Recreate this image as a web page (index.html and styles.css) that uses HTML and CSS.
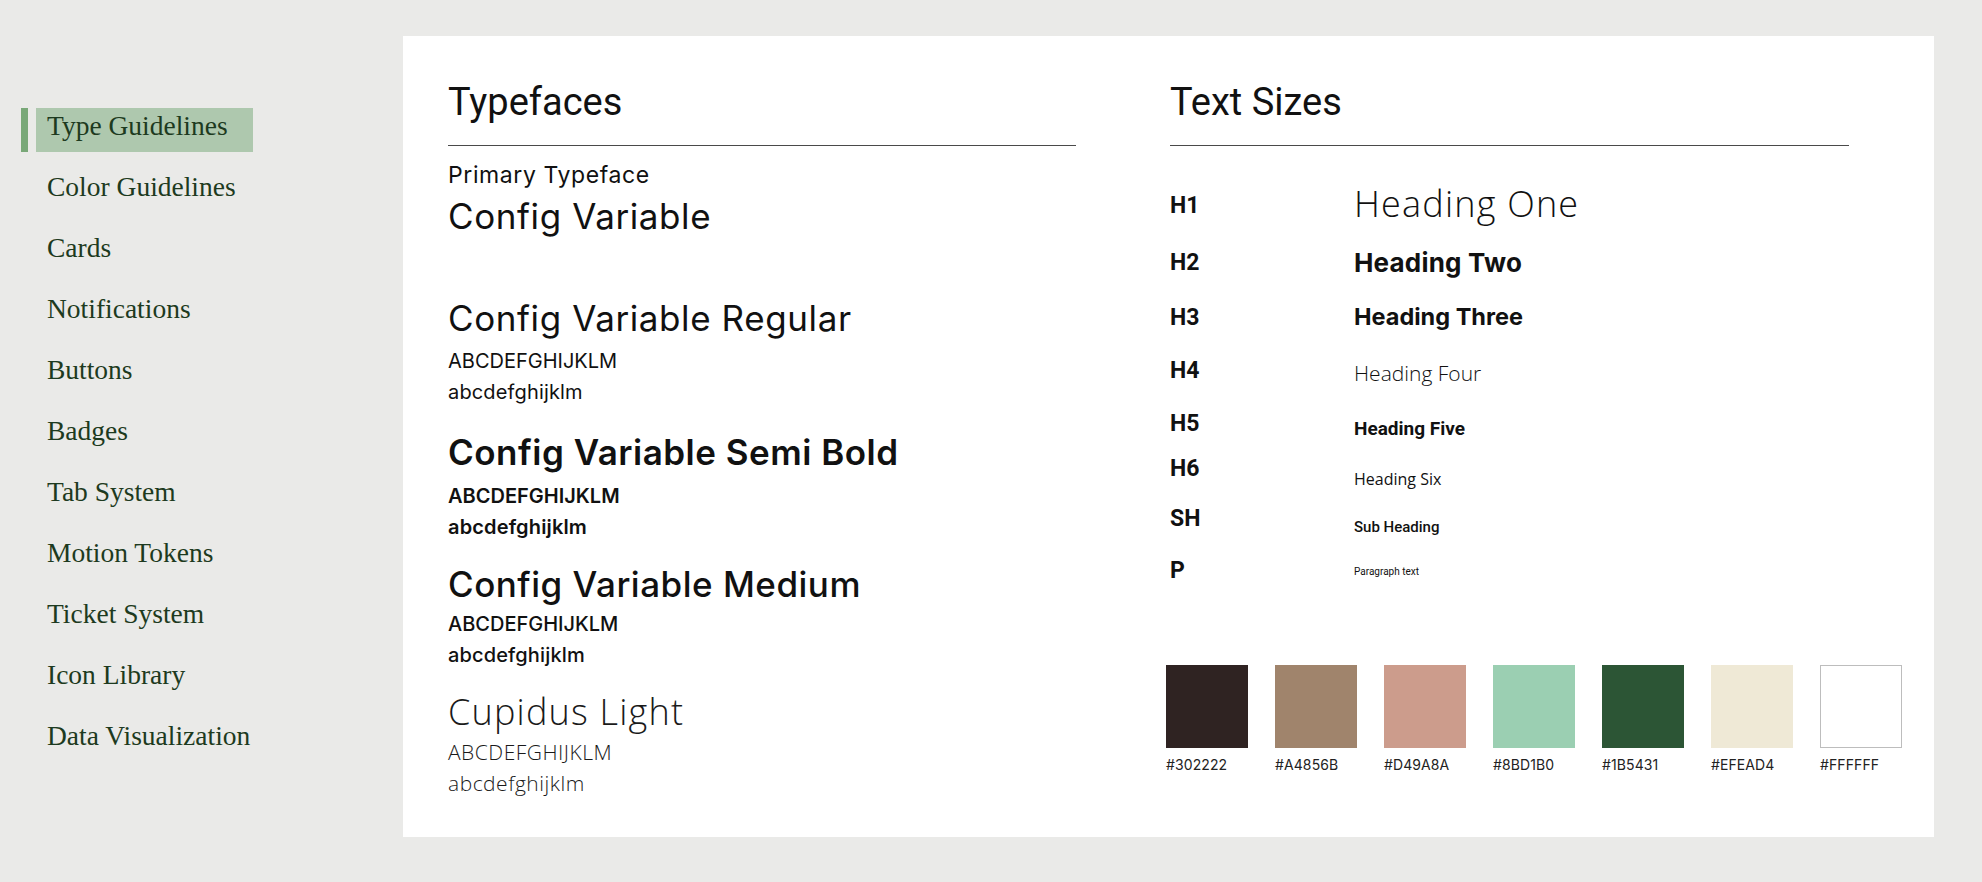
FILE: index.html
```html
<!DOCTYPE html>
<html lang="en">
<head>
<meta charset="utf-8">
<title>Type Guidelines</title>
<link rel="stylesheet" href="styles.css">
</head>
<body>
<div class="page">
  <nav class="sidebar">
    <a class="nav-item is-active"><span class="nav-bar"></span><span class="nav-label">Type Guidelines</span></a>
    <a class="nav-item"><span class="nav-bar"></span><span class="nav-label">Color Guidelines</span></a>
    <a class="nav-item"><span class="nav-bar"></span><span class="nav-label">Cards</span></a>
    <a class="nav-item"><span class="nav-bar"></span><span class="nav-label">Notifications</span></a>
    <a class="nav-item"><span class="nav-bar"></span><span class="nav-label">Buttons</span></a>
    <a class="nav-item"><span class="nav-bar"></span><span class="nav-label">Badges</span></a>
    <a class="nav-item"><span class="nav-bar"></span><span class="nav-label">Tab System</span></a>
    <a class="nav-item"><span class="nav-bar"></span><span class="nav-label">Motion Tokens</span></a>
    <a class="nav-item"><span class="nav-bar"></span><span class="nav-label">Ticket System</span></a>
    <a class="nav-item"><span class="nav-bar"></span><span class="nav-label">Icon Library</span></a>
    <a class="nav-item"><span class="nav-bar"></span><span class="nav-label">Data Visualization</span></a>
  </nav>

  <main class="card">
    <section class="col col-left">
      <h2 class="section-title">Typefaces</h2>
      <hr class="rule">
      <div class="primary">
        <div class="primary-label">Primary Typeface</div>
        <div class="primary-name">Config Variable</div>
      </div>
      <div class="family family-regular">
        <div class="family-name">Config Variable Regular</div>
        <div class="family-upper">ABCDEFGHIJKLM</div>
        <div class="family-lower">abcdefghijklm</div>
      </div>
      <div class="family family-bold">
        <div class="family-name">Config Variable Semi Bold</div>
        <div class="family-upper">ABCDEFGHIJKLM</div>
        <div class="family-lower">abcdefghijklm</div>
      </div>
      <div class="family family-medium">
        <div class="family-name">Config Variable Medium</div>
        <div class="family-upper">ABCDEFGHIJKLM</div>
        <div class="family-lower">abcdefghijklm</div>
      </div>
      <div class="family family-light">
        <div class="family-name">Cupidus Light</div>
        <div class="family-upper">ABCDEFGHIJKLM</div>
        <div class="family-lower">abcdefghijklm</div>
      </div>
    </section>

    <section class="col col-right">
      <h2 class="section-title">Text Sizes</h2>
      <hr class="rule">
      <div class="sizes">
        <div class="size-row row-h1"><span class="size-tag">H1</span><span class="size-sample">Heading One</span></div>
        <div class="size-row row-h2"><span class="size-tag">H2</span><span class="size-sample">Heading Two</span></div>
        <div class="size-row row-h3"><span class="size-tag">H3</span><span class="size-sample">Heading Three</span></div>
        <div class="size-row row-h4"><span class="size-tag">H4</span><span class="size-sample">Heading Four</span></div>
        <div class="size-row row-h5"><span class="size-tag">H5</span><span class="size-sample">Heading Five</span></div>
        <div class="size-row row-h6"><span class="size-tag">H6</span><span class="size-sample">Heading Six</span></div>
        <div class="size-row row-sh"><span class="size-tag">SH</span><span class="size-sample">Sub Heading</span></div>
        <div class="size-row row-p"><span class="size-tag">P</span><span class="size-sample">Paragraph text</span></div>
      </div>
      <div class="swatches">
        <div class="swatch"><div class="chip chip-1"></div><div class="chip-code">#302222</div></div>
        <div class="swatch"><div class="chip chip-2"></div><div class="chip-code">#A4856B</div></div>
        <div class="swatch"><div class="chip chip-3"></div><div class="chip-code">#D49A8A</div></div>
        <div class="swatch"><div class="chip chip-4"></div><div class="chip-code">#8BD1B0</div></div>
        <div class="swatch"><div class="chip chip-5"></div><div class="chip-code">#1B5431</div></div>
        <div class="swatch"><div class="chip chip-6"></div><div class="chip-code">#EFEAD4</div></div>
        <div class="swatch"><div class="chip chip-7"></div><div class="chip-code">#FFFFFF</div></div>
      </div>
    </section>
  </main>
</div>
</body>
</html>
```

FILE: styles.css
```css
* { box-sizing: border-box; }

html, body {
  margin: 0;
  padding: 0;
  background: #eaeae8;
}

body {
  font-family: Roboto, "Liberation Sans", sans-serif;
  color: #111;
}

.page {
  display: flex;
  align-items: flex-start;
  width: 1982px;
  height: 882px;
  overflow: hidden;
}

/* ---------- Sidebar ---------- */
.sidebar {
  width: 403px;
  flex: 0 0 403px;
  padding: 108px 0 0 21px;
  display: flex;
  flex-direction: column;
  gap: 17px;
}

.nav-item {
  display: flex;
  align-items: stretch;
  gap: 8px;
  height: 44px;
  text-decoration: none;
}

.nav-bar {
  width: 7px;
  flex: 0 0 7px;
}

.nav-label {
  width: 217px;
  padding: 0 0 8px 11px;
  font-family: "Liberation Serif", "Times New Roman", serif;
  font-size: 27.5px;
  line-height: 36px;
  color: #1d3a20;
  white-space: nowrap;
}

.nav-item.is-active .nav-bar { background: #79a878; }
.nav-item.is-active .nav-label { background: #aec8ae; }

/* ---------- Card ---------- */
.card {
  margin-top: 36px;
  width: 1531px;
  height: 801px;
  background: #ffffff;
  padding: 47px 28px 0 45px;
  display: grid;
  grid-template-columns: 628px 1fr;
  column-gap: 94px;
}

.col { min-width: 0; }

.section-title {
  margin: 0;
  font-family: Roboto, sans-serif;
  font-weight: 400;
  font-size: 38px;
  line-height: 38px;
  color: #111;
}

.rule {
  margin: 24px 0 0 0;
  height: 0;
  border: 0;
  border-top: 1px solid #4a4a4a;
}

.col-right .rule { width: 679px; }

/* ---------- Typefaces column ---------- */
.col-left { font-family: Inter, Roboto, sans-serif; }

.primary { margin-top: 18px; }

.primary-label {
  font-size: 23px;
  line-height: 23px;
  font-weight: 400;
  letter-spacing: 0.6px;
}

.primary-name {
  margin-top: 12px;
  font-size: 35px;
  line-height: 35px;
  font-weight: 400;
  letter-spacing: 0.6px;
}

.family-name {
  font-size: 35px;
  line-height: 35px;
}

.family-upper {
  margin-top: 15px;
  font-size: 20px;
  line-height: 20px;
}

.family-lower {
  margin-top: 11px;
  font-size: 20px;
  line-height: 20px;
  letter-spacing: 0.15px;
}

.family-regular { margin-top: 67px; }
.family-regular .family-name { letter-spacing: 0.6px; }
.family-regular .family-name,
.family-regular .family-upper,
.family-regular .family-lower { font-weight: 400; }

.family-bold { margin-top: 33px; }
.family-bold .family-name { letter-spacing: 0.5px; }
.family-bold .family-name,
.family-bold .family-upper,
.family-bold .family-lower { font-weight: 600; }
.family-bold .family-upper { margin-top: 16px; }

.family-medium { margin-top: 30px; }
.family-medium .family-name { letter-spacing: 0.5px; }
.family-medium .family-name,
.family-medium .family-upper,
.family-medium .family-lower { font-weight: 500; }
.family-medium .family-upper { margin-top: 12px; }

.family-light { margin-top: 29px; }
.family-light .family-name,
.family-light .family-upper,
.family-light .family-lower {
  font-family: "Open Sans", sans-serif;
  font-weight: 300;
  color: #1a1a1a;
}
.family-light .family-name { font-size: 36px; line-height: 36px; letter-spacing: 1.2px; }
.family-light .family-upper { margin-top: 12px; font-size: 21px; line-height: 21px; letter-spacing: 0.5px; }
.family-light .family-lower { margin-top: 10px; font-size: 21px; line-height: 21px; letter-spacing: 0.5px; }

/* ---------- Text sizes column ---------- */
.sizes {
  margin-top: 40px;
  display: flex;
  flex-direction: column;
}

.size-row {
  display: flex;
  align-items: flex-start;
}

.size-tag {
  width: 184px;
  flex: 0 0 184px;
  font-size: 23px;
  line-height: 23px;
  font-weight: 700;
  color: #111;
}

.size-sample { color: #111; white-space: nowrap; }

.row-h1 .size-tag { margin-top: 8px; }
.row-h1 .size-sample {
  font-family: "Open Sans", sans-serif;
  font-weight: 300;
  font-size: 36px;
  line-height: 36px;
  letter-spacing: 1.2px;
}

.row-h2 { margin-top: 28px; }
.row-h2 .size-tag { margin-top: 1px; }
.row-h2 .size-sample {
  font-family: Inter, sans-serif;
  font-weight: 700;
  font-size: 26px;
  line-height: 26px;
  letter-spacing: 0.2px;
}

.row-h3 { margin-top: 29px; }
.row-h3 .size-tag { margin-top: 1px; }
.row-h3 .size-sample {
  font-family: Inter, sans-serif;
  font-weight: 700;
  font-size: 23.5px;
  line-height: 24px;
}

.row-h4 { margin-top: 30px; }
.row-h4 .size-sample {
  margin-top: 4px;
  font-family: "Open Sans", sans-serif;
  font-weight: 300;
  font-size: 21px;
  line-height: 21px;
}

.row-h5 { margin-top: 28px; }
.row-h5 .size-sample { margin-top: 7px; font-weight: 700; font-size: 19px; line-height: 19px; }

.row-h6 { margin-top: 19px; }
.row-h6 .size-sample {
  margin-top: 14px;
  font-family: "Open Sans", sans-serif;
  font-weight: 400;
  font-size: 16px;
  line-height: 17px;
}

.row-sh { margin-top: 19px; }
.row-sh .size-sample { margin-top: 13px; font-weight: 500; font-size: 15px; line-height: 15px; }

.row-p { margin-top: 24px; }
.row-p .size-sample { margin-top: 8px; font-weight: 400; font-size: 10px; line-height: 10px; }

/* ---------- Swatches ---------- */
.swatches {
  margin-top: 83px;
  margin-left: -4px;
  display: flex;
  gap: 27px;
}

.swatch { width: 82px; }

.chip {
  width: 82px;
  height: 83px;
}

.chip-1 { background: #2f2322; }
.chip-2 { background: #a0846c; }
.chip-3 { background: #cc9c8c; }
.chip-4 { background: #9bcfb2; }
.chip-5 { background: #2c5535; }
.chip-6 { background: #efe9d6; }
.chip-7 { background: #ffffff; border: 1px solid #bdbdbd; }

.chip-code {
  margin-top: 9px;
  font-family: Inter, sans-serif;
  font-size: 14px;
  line-height: 15px;
  letter-spacing: 0.1px;
  color: #222;
}
```
